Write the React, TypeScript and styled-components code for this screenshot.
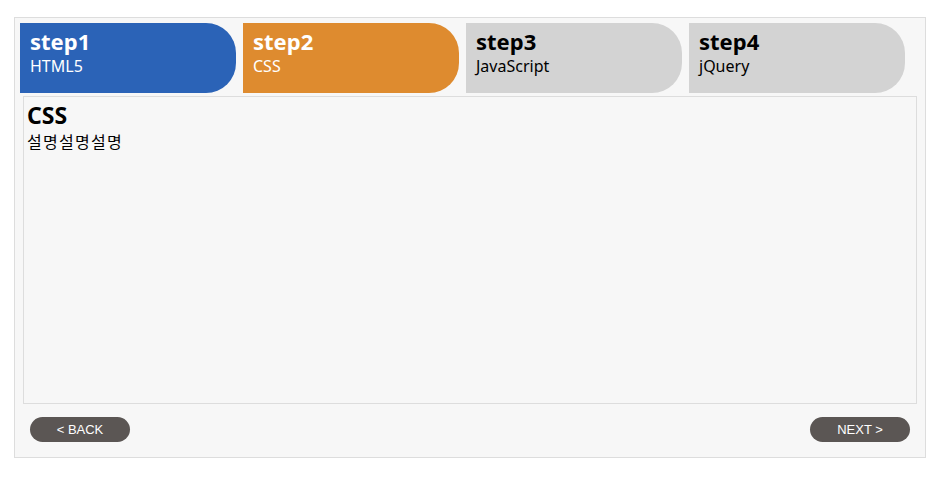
import React, { useState } from 'react';
import styled, { createGlobalStyle } from 'styled-components';

const GlobalStyle = createGlobalStyle`
  body {
    margin: 0;
    background: #ffffff;
    font-family: 'Noto Sans', 'Noto Sans CJK KR', sans-serif;
  }
`;

const steps = [
  { title: 'step1', sub: 'HTML5', desc: '설명설명설명' },
  { title: 'step2', sub: 'CSS', desc: '설명설명설명' },
  { title: 'step3', sub: 'JavaScript', desc: '설명설명설명' },
  { title: 'step4', sub: 'jQuery', desc: '설명설명설명' },
];

const Page = styled.div`
  padding: 17px 0 0 14px;
`;

const Wizard = styled.div`
  width: 910px;
  height: 439px;
  border: 1px solid #dddddd;
  background: #f7f7f7;
  display: flex;
  flex-direction: column;
`;

const TabRow = styled.ul`
  display: flex;
  gap: 7px;
  list-style: none;
  margin: 0;
  padding: 5px 5px 0;
`;

type TabState = 'done' | 'active' | 'todo';

const Tab = styled.li<{ $state: TabState }>`
  width: 216px;
  height: 70px;
  box-sizing: border-box;
  padding: 5px 10px 0;
  border-radius: 0 30px 30px 0;
  cursor: pointer;
  background: ${({ $state }) =>
    $state === 'done' ? '#2b63b7' : $state === 'active' ? '#de8b2f' : '#d3d3d3'};
  color: ${({ $state }) => ($state === 'todo' ? '#000000' : '#ffffff')};
`;

const TabTitle = styled.div`
  font-size: 22px;
  font-weight: 700;
  line-height: 26px;
`;

const TabSub = styled.div`
  margin-top: 2px;
  font-size: 16px;
  line-height: 20px;
`;

const Panel = styled.section`
  box-sizing: border-box;
  margin: 3px 8px 0;
  height: 308px;
  border: 1px solid #dddddd;
  background: #f7f7f7;
  padding: 4px 3px;
`;

const PanelTitle = styled.h3`
  margin: 0;
  font-size: 23px;
  font-weight: 700;
  line-height: 28px;
  color: #000000;
`;

const PanelText = styled.p`
  margin: 0;
  font-family: 'Noto Sans CJK KR', sans-serif;
  font-size: 16px;
  letter-spacing: 1.3px;
  line-height: 24px;
  color: #000000;
`;

const Footer = styled.div`
  display: flex;
  justify-content: space-between;
  padding: 13px 15px 0;
`;

const NavButton = styled.button`
  width: 100px;
  height: 25px;
  border: none;
  border-radius: 13px;
  background: #5b5654;
  color: #ffffff;
  font-family: 'Liberation Sans', Arial, sans-serif;
  font-size: 13px;
  padding: 0;
  cursor: pointer;
`;

export default function App() {
  const [current, setCurrent] = useState(1);
  const step = steps[current];

  return (
    <Page>
      <GlobalStyle />
      <Wizard>
        <TabRow>
          {steps.map((s, i) => (
            <Tab
              key={s.title}
              $state={i < current ? 'done' : i === current ? 'active' : 'todo'}
              onClick={() => setCurrent(i)}
            >
              <TabTitle>{s.title}</TabTitle>
              <TabSub>{s.sub}</TabSub>
            </Tab>
          ))}
        </TabRow>
        <Panel>
          <PanelTitle>{step.sub}</PanelTitle>
          <PanelText>{step.desc}</PanelText>
        </Panel>
        <Footer>
          <NavButton onClick={() => setCurrent((c) => Math.max(0, c - 1))}>&lt; BACK</NavButton>
          <NavButton onClick={() => setCurrent((c) => Math.min(steps.length - 1, c + 1))}>
            NEXT &gt;
          </NavButton>
        </Footer>
      </Wizard>
    </Page>
  );
}
